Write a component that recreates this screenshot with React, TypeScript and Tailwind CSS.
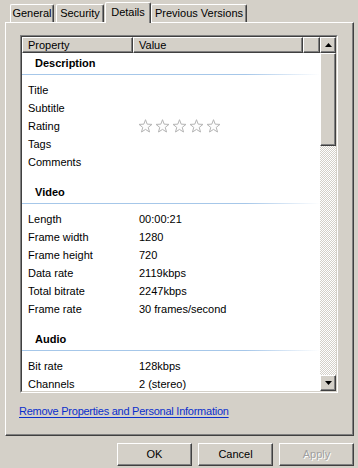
import React from 'react';

type Row = { name: string; value?: string; stars?: boolean };
type Group = { title: string; rows: Row[] };

const groups: Group[] = [
    {
        title: 'Description',
        rows: [
            { name: 'Title' },
            { name: 'Subtitle' },
            { name: 'Rating', stars: true },
            { name: 'Tags' },
            { name: 'Comments' },
        ],
    },
    {
        title: 'Video',
        rows: [
            { name: 'Length', value: '00:00:21' },
            { name: 'Frame width', value: '1280' },
            { name: 'Frame height', value: '720' },
            { name: 'Data rate', value: '2119kbps' },
            { name: 'Total bitrate', value: '2247kbps' },
            { name: 'Frame rate', value: '30 frames/second' },
        ],
    },
    {
        title: 'Audio',
        rows: [
            { name: 'Bit rate', value: '128kbps' },
            { name: 'Channels', value: '2 (stereo)' },
        ],
    },
];

const raised = "bg-[#d4d0c8] border-t border-l border-t-white border-l-white border-r border-b border-r-[#404040] border-b-[#404040] shadow-[inset_-1px_-1px_#808080]";

function Star() {
    return (
        <svg width="15" height="15" viewBox="0 0 15 15">
            <polygon
                points="7.5,0.7 9.2,5.15 13.97,5.4 10.26,8.4 11.5,13 7.5,10.4 3.5,13 4.74,8.4 1.03,5.4 5.8,5.15"
                fill="#fdfdfd"
                stroke="#b4b4b4"
                strokeWidth="1"
                strokeLinejoin="round"
            />
        </svg>
    );
}

function Arrow({ up }: { up?: boolean }) {
    return (
        <svg width="7" height="4" viewBox="0 0 7 4">
            <polygon points={up ? "3.5,0 7,4 0,4" : "0,0 7,0 3.5,4"} fill="#000" />
        </svg>
    );
}

function Tab({ label, active, className }: { label: string; active?: boolean; className: string }) {
    return (
        <div
            className={
                active
                    ? `relative z-10 h-[21px] -mb-px bg-[#d4d0c8] border-t border-l border-white border-r border-r-[#404040] shadow-[inset_-1px_0_#808080] rounded-t-[2px] flex justify-center pt-[3px] ${className}`
                    : `h-[18px] bg-[#d4d0c8] border-t border-l border-white border-r border-r-[#404040] shadow-[inset_-1px_0_#808080] rounded-t-[2px] flex justify-center pt-[2px] ${className}`
            }
        >
            {label}
        </div>
    );
}

export default function App() {
    return (
        <div className="w-[358px] h-[468px] bg-[#d4d0c8] flex flex-col font-['Liberation_Sans',Arial,sans-serif] text-[11px] text-black leading-[13px] overflow-hidden">
            <div className="h-[22px] flex items-end pl-[10px]">
                <Tab label="General" className="w-[44px]" />
                <Tab label="Security" className="w-[48px] ml-[2px]" />
                <Tab label="Details" active className="w-[46px] ml-[1px]" />
                <Tab label="Previous Versions" className="w-[96px]" />
            </div>

            <div className="ml-[5px] w-[349px] h-[414px] border-t border-l border-white border-r border-b border-r-[#404040] border-b-[#404040] shadow-[inset_-1px_-1px_#808080] pt-[12px] pl-[14px]">
                <div className="w-[318px] h-[358px] border border-t-[#808080] border-l-[#808080] border-r-white border-b-white">
                    <div className="w-full h-full border border-t-[#404040] border-l-[#404040] border-r-[#d4d0c8] border-b-[#d4d0c8] bg-white flex">
                        <div className="flex-1 flex flex-col overflow-hidden">
                            <div className="h-[16px] flex shrink-0">
                                <div className={`w-[111px] pl-[5px] flex items-center ${raised}`}>Property</div>
                                <div className={`w-[170px] pl-[5px] flex items-center ${raised}`}>Value</div>
                                <div className={`flex-1 ${raised}`} />
                            </div>
                            <div className="flex-1 overflow-hidden -mt-px">
                                {groups.map((g, gi) => (
                                    <div key={g.title} className={gi === 0 ? '' : 'mt-[10px]'}>
                                        <div className="h-[22px] flex items-center pl-[13px] font-bold">{g.title}</div>
                                        <div className="h-px w-full bg-[linear-gradient(to_right,#a6c7e9_75%,#ffffff)]" />
                                        <div className="h-[6px]" />
                                        {g.rows.map((r) => (
                                            <div key={r.name} className="h-[18px] flex items-center">
                                                <div className="w-[117px] pl-[6px] shrink-0">{r.name}</div>
                                                {r.stars ? (
                                                    <div className="flex gap-[2px] -ml-[1px]">
                                                        <Star />
                                                        <Star />
                                                        <Star />
                                                        <Star />
                                                        <Star />
                                                    </div>
                                                ) : (
                                                    <div>{r.value}</div>
                                                )}
                                            </div>
                                        ))}
                                    </div>
                                ))}
                            </div>
                        </div>
                        <div className="w-[16px] flex flex-col shrink-0">
                            <div className={`h-[16px] flex items-center justify-center ${raised}`}>
                                <Arrow up />
                            </div>
                            <div className={`h-[93px] ${raised}`} />
                            <div className="flex-1 bg-[repeating-conic-gradient(#d4d0c8_0_25%,#ffffff_0_50%)] bg-size-[2px_2px]" />
                            <div className={`h-[16px] flex items-center justify-center ${raised}`}>
                                <Arrow />
                            </div>
                        </div>
                    </div>
                </div>
                <div className="mt-[12px] -ml-[1px]">
                    <span className="text-[#0b2fcc] underline underline-offset-[2px] tracking-[-0.25px]">Remove Properties and Personal Information</span>
                </div>
            </div>

            <div className="mt-[7px] flex justify-end gap-[6px] pr-[4px]">
                <div className={`w-[75px] h-[23px] flex items-center justify-center ${raised}`}>OK</div>
                <div className={`w-[75px] h-[23px] flex items-center justify-center ${raised}`}>Cancel</div>
                <div className={`w-[75px] h-[23px] flex items-center justify-center text-[#a0a0a0] [text-shadow:1px_1px_#fff] ${raised}`}>Apply</div>
            </div>
        </div>
    );
}
